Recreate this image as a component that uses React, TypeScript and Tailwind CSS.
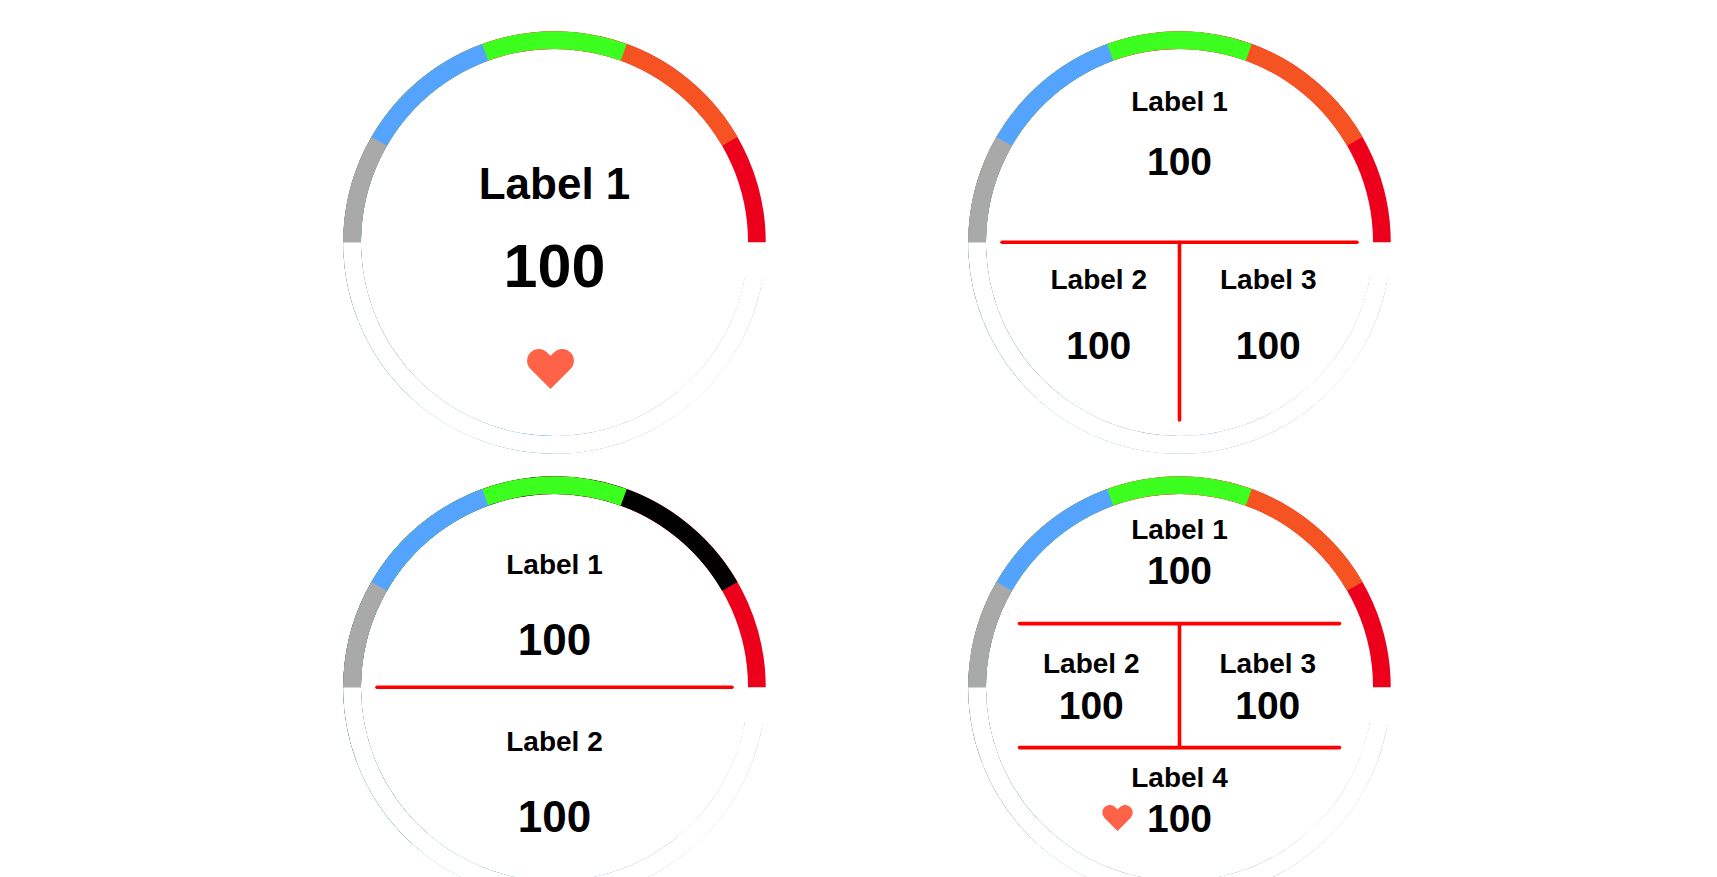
import type { ReactNode } from "react";

const CENTER_X = 222.5;
const CENTER_Y = 222.5;
const RADIUS = 202.4;

type Line = [x1: number, y1: number, x2: number, y2: number];

function arcPath(from: number, to: number) {
  const point = (deg: number) => {
    const rad = (deg * Math.PI) / 180;
    return `${(CENTER_X + RADIUS * Math.cos(rad)).toFixed(2)} ${(CENTER_Y + RADIUS * Math.sin(rad)).toFixed(2)}`;
  };
  const large = to - from > 180 ? 1 : 0;
  return `M${point(from)} A${RADIUS} ${RADIUS} 0 ${large} 1 ${point(to)}`;
}

interface GaugeProps {
  name: string;
  high?: string;
  lines?: Line[];
  children: ReactNode;
}

function Gauge({ name, high = "#f55321", lines = [], children }: GaugeProps) {
  // Each range is a long arc; the next one covers all but its last stretch.
  const ranges = [
    { color: "#ed001c", from: 160, to: 360 },
    { color: high, from: 130, to: 330 },
    { color: "#3cff1f", from: 90, to: 290 },
    { color: "#54a4ff", from: 50, to: 250 },
    { color: "#a9a9a9", from: 10, to: 210 },
    { color: "#ffffff", from: 0, to: 180 },
  ];
  return (
    <section aria-label={name} className="relative h-[445px] w-[445px]">
      <svg viewBox="0 0 445 445" className="absolute inset-0 h-full w-full" aria-hidden="true">
        {ranges.map((r) => (
          <path key={r.from} d={arcPath(r.from, r.to)} fill="none" stroke={r.color} strokeWidth={17.7} />
        ))}
        {lines.map(([x1, y1, x2, y2]) => (
          <line
            key={`${x1}-${y1}-${x2}-${y2}`}
            x1={x1}
            y1={y1}
            x2={x2}
            y2={y2}
            stroke="#ff0000"
            strokeWidth={3.6}
            strokeLinecap="round"
          />
        ))}
      </svg>
      <div className="relative flex h-full flex-col">{children}</div>
    </section>
  );
}

function Heart({ className }: { className: string }) {
  return (
    <svg viewBox="0 0 46.8 40" className={className} aria-hidden="true">
      <path
        fill="#ff6347"
        d="M23.4 6.8 20 3.4A11.7 11.7 0 1 0 3.4 20L23.4 40 43.4 20A11.7 11.7 0 1 0 26.8 3.4Z"
      />
    </svg>
  );
}

function Label({ children }: { children: ReactNode }) {
  return <h2 className="text-[28px] leading-8">{children}</h2>;
}

function Value({ children }: { children: ReactNode }) {
  return <p className="text-[39px] leading-10">{children}</p>;
}

export default function App() {
  return (
    <main className="grid grid-cols-2 justify-items-center bg-white pt-5 pr-[225px] pl-[242px] font-['Liberation_Sans',Arial,sans-serif] font-bold text-black">
      <Gauge name="One reading">
        <div className="flex flex-col items-center pt-[140px]">
          <h2 className="text-[44px] leading-[48px]">Label 1</h2>
          <p className="mt-[26px] text-[61px] leading-[64px]">100</p>
          <Heart className="mt-[51px] mr-2 h-10 w-[47px]" />
        </div>
      </Gauge>

      <Gauge
        name="Three readings"
        lines={[
          [45, 222.3, 400, 222.3],
          [222.5, 222.3, 222.5, 400],
        ]}
      >
        <div className="flex h-1/2 flex-col items-center gap-6 pt-[66px]">
          <Label>Label 1</Label>
          <Value>100</Value>
        </div>
        <div className="flex h-1/2 justify-center gap-[73px] pt-[21px] pl-2">
          <div className="flex flex-col items-center gap-[30px]">
            <Label>Label 2</Label>
            <Value>100</Value>
          </div>
          <div className="flex flex-col items-center gap-[30px]">
            <Label>Label 3</Label>
            <Value>100</Value>
          </div>
        </div>
      </Gauge>

      <Gauge name="Two readings" high="#000000" lines={[[45, 222.3, 400, 222.3]]}>
        <div className="flex flex-col items-center gap-[35px] pt-[84px]">
          <Label>Label 1</Label>
          <p className="text-[44px] leading-[48px]">100</p>
        </div>
        <div className="flex flex-col items-center gap-[35px] pt-[62px]">
          <Label>Label 2</Label>
          <p className="text-[44px] leading-[48px]">100</p>
        </div>
      </Gauge>

      <Gauge
        name="Four readings"
        lines={[
          [62.5, 158.6, 382.5, 158.6],
          [222.5, 158.6, 222.5, 282.6],
          [62.5, 282.6, 382.5, 282.6],
        ]}
      >
        <div className="flex flex-col items-center gap-[5px] pt-[49px]">
          <Label>Label 1</Label>
          <Value>100</Value>
        </div>
        <div className="flex justify-center gap-20 pt-[57px]">
          <div className="flex flex-col items-center gap-[6px]">
            <Label>Label 2</Label>
            <Value>100</Value>
          </div>
          <div className="flex flex-col items-center gap-[6px]">
            <Label>Label 3</Label>
            <Value>100</Value>
          </div>
        </div>
        <div className="flex flex-col items-center gap-[5px] pt-9">
          <Label>Label 4</Label>
          <div className="relative">
            <Heart className="absolute top-[6px] right-full mr-[14px] h-[26px] w-[31px]" />
            <Value>100</Value>
          </div>
        </div>
      </Gauge>
    </main>
  );
}
